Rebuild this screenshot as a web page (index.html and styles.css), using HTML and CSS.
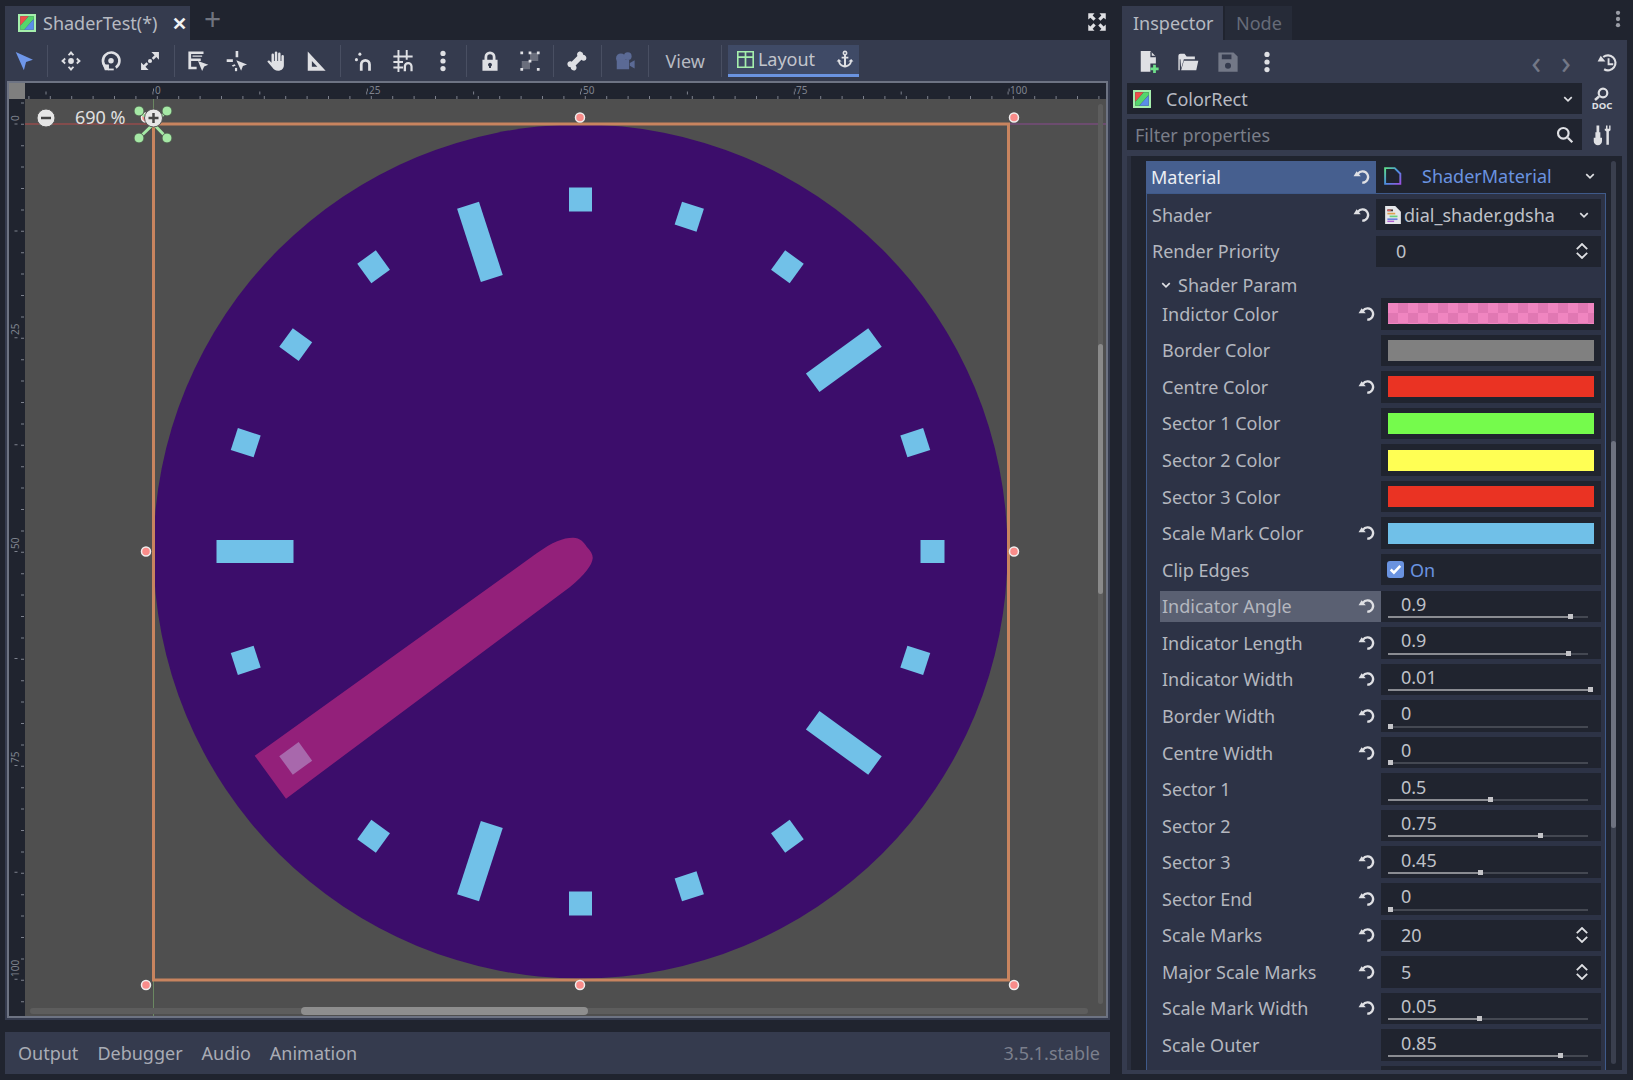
FILE: index.html
```html
<!DOCTYPE html>
<html lang="en">

<head>
  <meta charset="UTF-8">
  <title>ShaderTest - Godot</title>
  <link rel="stylesheet" href="styles.css">
</head>

<body>

  <!-- icon set -->
  <svg class="sprites" width="0" height="0">
    <symbol id="i-select" viewBox="0 0 16 16"><path d="M2 1.5l12.5 5.6-5 1.6-1.6 6z" fill="#6f97ea"/></symbol>
    <symbol id="i-move" viewBox="0 0 16 16"><path d="M8 .8l2.3 2.6-1 .8L8 3 6.700 4.200l-1-.8zM8 15.200l-2.300-2.600 1-.8L8 13l1.300-1.200 1 .8zM.8 8l2.600-2.300.8 1L3 8l1.200 1.300-.8 1zM15.200 8l-2.600 2.300-.8-1L13 8l-1.200-1.300.8-1z"/><circle cx="8" cy="8" r="2.100"/></symbol>
    <symbol id="i-rotate" viewBox="0 0 16 16"><path d="M4.500 12.600A6 6 0 1 1 11.500 12.800" fill="none" stroke="currentColor" stroke-width="1.900"/><path d="M2 10.500h4.500v4.300H3.500z"/><path d="M6 13.500h4v1.300H6z"/><circle cx="8" cy="7.800" r="2"/></symbol>
    <symbol id="i-scale" viewBox="0 0 16 16"><path d="M9 1.500h5.500V7l-1.900-1.900-2 2-1.300-1.300 2-2zM7 14.500H1.500V9l1.900 1.900 2-2 1.300 1.300-2 2z"/><circle cx="8" cy="8" r="1.500"/></symbol>
    <symbol id="i-list" viewBox="0 0 16 16"><path d="M1 1h11v1.900H3v3.200h7V8H3v4.100h4V14H1z"/><path d="M8 8l7.500 2.800-3 1.200L11 15.300z"/><path d="M4 4h7v.9H4z"/></symbol>
    <symbol id="i-pivot" viewBox="0 0 16 16"><path d="M.5 6.800h4.500v1.900H.5zM7 .8h1.900v4.500H7zM4.200 11.300l2-1 .9.900-2 1z"/><path d="M7.500 7.500l7.800 3-3 1.100-1.300 3.400z"/><path d="M6.500 13h1.600v2.400H6.500z"/></symbol>
    <symbol id="i-hand" viewBox="0 0 16 16"><path d="M4 3.500a.9.9 0 0 1 1.800 0V8h.6V1.900a.9.9 0 0 1 1.800 0V8h.6V2.700a.9.900 0 0 1 1.800 0V8h.6V4.500a.9.9 0 0 1 1.800 0V11c0 2.500-1.800 4-4.200 4-2.100 0-3.200-.8-4.300-2.500L1.200 8.800c-.5-.9.700-1.700 1.400-.9L4 9.300z"/></symbol>
    <symbol id="i-ruler" viewBox="0 0 16 16"><path fill-rule="evenodd" d="M2 1l13 14H2zM5 8v4.200h4z"/></symbol>
    <symbol id="i-snap" viewBox="0 0 16 16"><circle cx="2.500" cy="7" r="1.100"/><circle cx="5" cy="3" r="1.100"/><path d="M5 15v-4.500a4 4 0 0 1 8 0V15h-2v-4.500a2 2 0 0 0-4 0V15z"/></symbol>
    <symbol id="i-grid" viewBox="0 0 16 16"><path d="M4 0h1.400v4H10V0h1.400v4H15v1.400h-3.600V7H10V5.400H5.400V8H8v1.400H5.400V12H8v1.400H5.400V16H4v-2.600H1V12h3V9.400H1V8h3V5.400H1V4h3z"/><path d="M8.500 15.500V12a3.200 3.200 0 0 1 6.500 0v3.500h-1.600V12a1.600 1.600 0 0 0-3.200 0v3.500z"/></symbol>
    <symbol id="i-dots" viewBox="0 0 16 16"><circle cx="8" cy="2.500" r="1.900"/><circle cx="8" cy="8" r="1.900"/><circle cx="8" cy="13.500" r="1.900"/></symbol>
    <symbol id="i-lock" viewBox="0 0 16 16"><path fill-rule="evenodd" d="M8 1a4 4 0 0 1 4 4v2h1.500v8h-11V7H4V5a4 4 0 0 1 4-4zm0 2a2 2 0 0 0-2 2v2h4V5a2 2 0 0 0-2-2zm0 6.200a1.500 1.500 0 0 0-.7 2.800v1h1.400v-1A1.500 1.500 0 0 0 8 9.200z"/></symbol>
    <symbol id="i-group" viewBox="0 0 16 16"><path d="M2 8h6v6H2z M8 2h6v6H8z" fill="#6a6e7c"/><path d="M1 1h2v2H1zM1 13h2v2H1zM13 1h2v2h-2zM13 13h2v2h-2zM7 1h2v2H7zM7 7h2v2H7z"/></symbol>
    <symbol id="i-bone" viewBox="0 0 16 16"><path d="M10.800 1.200a2.300 2.300 0 0 1 1.700 2.300 2.300 2.300 0 0 1 2 3.500c-.9 1.100-2.300 1-3.300.1L7 11.300c.9 1 1 2.400-.1 3.300a2.300 2.300 0 0 1-3.500-2 2.300 2.300 0 0 1-2.300-1.700c-.5-1.900 1.300-3.200 3-2.400l4.200-4.200c-.8-1.700.600-3.600 2.500-3.100z"/></symbol>
    <symbol id="i-camera" viewBox="0 0 16 16"><g fill="#5b6a95"><circle cx="5" cy="6" r="3.500"/><circle cx="10" cy="4.500" r="2.800"/><path d="M2 7h9v7H2zM11.500 9.500L15 7.500v6l-3.500-2z"/></g></symbol>
    <symbol id="i-layout" viewBox="0 0 16 16"><path fill="#a5efac" fill-rule="evenodd" d="M0 0h16v16H0zM1.500 1.500V5h5.700V1.500zm7.300 0V5h5.700V1.500zM1.500 6.500v8h5.700v-8zm7.300 0v8h5.700v-8z"/></symbol>
    <symbol id="i-anchor" viewBox="0 0 16 16"><path fill-rule="evenodd" d="M8 .5a2.200 2.200 0 0 1 .9 4.200V6H11v1.500H8.900v6c1.900-.3 3.300-1.500 3.700-3.200H11L13.500 8l2 2.300h-1.300C13.700 13 11.200 15.500 8 15.500S2.300 13 1.800 10.300H.5L2.500 8 5 10.300H3.400c.4 1.700 1.800 2.900 3.700 3.200v-6H5V6h2.100V4.700A2.200 2.200 0 0 1 8 .5zm0 1.400a.8.800 0 1 0 0 1.600.8.800 0 0 0 0-1.600z"/></symbol>
    <symbol id="i-full" viewBox="0 0 16 16"><path d="M1 1h5L4.500 2.700 7 5.200 5.200 7 2.700 4.500 1 6zM15 1v5l-1.700-1.500L10.800 7 9 5.200l2.500-2.500L10 1zM1 15v-5l1.700 1.500L5.200 9 7 10.800l-2.500 2.500L6 15zM15 15h-5l1.500-1.700L9 10.800 10.800 9l2.500 2.500L15 10z"/></symbol>
    <symbol id="i-colorrect" viewBox="0 0 16 16"><path fill="#a5efac" fill-rule="evenodd" d="M0 0h16v16H0zM2 2v12h12V2z"/><path fill="#f0504a" d="M2 2h7.500L2 10.500z"/><path fill="#55d66b" d="M9.500 2H14v2.500L5.500 14H2v-3.500z"/><path fill="#5a8ee8" d="M14 4.500V14H5.500z"/></symbol>
    <symbol id="i-newfile" viewBox="0 0 16 16"><path d="M2 0h7l4 4v5H9v6H2z"/><path d="M9.500.5v3.500H13" fill="none" stroke="#353b4e"/><path fill="#6fe08a" d="M11 10h2v2h2v2h-2v2h-2v-2H9v-2h2z"/></symbol>
    <symbol id="i-open" viewBox="0 0 16 16"><path fill-rule="evenodd" d="M1 14V3.500A1.500 1.500 0 0 1 2.500 2h3L7 4h6v2H5L3 12.500 2.500 6H2v8zM5 7h10.500l-1.500 7H3z"/></symbol>
    <symbol id="i-save" viewBox="0 0 16 16"><path fill-rule="evenodd" d="M1 1h11l3 3v11H1zM3.500 2.500v3.500h7V2.500zM8 8.500a2.200 2.200 0 1 0 0 4.400 2.200 2.200 0 0 0 0-4.400z"/></symbol>
    <symbol id="i-history" viewBox="0 0 16 16"><path d="M5 4a6 6 0 1 1 .7 9.800" fill="none" stroke="currentColor" stroke-width="1.700"/><path d="M.5 7.500h6.200L3 3z"/><path d="M8.500 5h1.500v4H13v1.500H8.500z"/></symbol>
    <symbol id="i-search" viewBox="0 0 16 16"><circle cx="6.500" cy="6.500" r="4.700" fill="none" stroke="currentColor" stroke-width="1.900"/><path d="M9.800 11.200l1.400-1.400 4 4-1.400 1.400z"/></symbol>
    <symbol id="i-tools" viewBox="0 0 16 16"><path d="M4 1h2v5h.8v4H8v2.500a3 3 0 0 1-6 0V10h1.200V6H4z"/><path d="M10 1v3.500l1.200 1V15h1.800V5.500l1.200-1V1l-1 0v2.500h-1.200V1h-1.100v2.500H10z"/></symbol>
    <symbol id="i-revert" viewBox="0 0 16 16"><path d="M4.300 5.200A5 5 0 1 1 8.200 13" fill="none" stroke="currentColor" stroke-width="2"/><path d="M.5 7.400h6.400L3.200 2.800z"/></symbol>
    <symbol id="i-shadermat" viewBox="0 0 16 16"><path d="M1 1h8.500l5 5v9H1z" fill="none" stroke="url(#matgrad)" stroke-width="1.700"/></symbol>
    <symbol id="i-shaderfile" viewBox="0 0 16 16"><path d="M1 0h9l5 5v11H1z" fill="#e6e7ea"/><path d="M3 3h5v1.700H3z" fill="#4a3a3a"/><path d="M3 3.200h3v1.300H3z" fill="#e05a5a"/><path d="M3 6h7v1.500H3z" fill="#e0a050"/><path d="M5 8.500h7v1.500H5z" fill="#68d080"/><path d="M3 11h9v1.500H3z" fill="#6a80e0"/><path d="M3 13h6v1.300H3z" fill="#b060d0"/></symbol>
    <symbol id="i-updown" viewBox="0 0 16 16"><path d="M2.800 6.200L8 1l5.200 5.200M2.800 9.800L8 15l5.200-5.200" fill="none" stroke="currentColor" stroke-width="1.800"/></symbol>
    <symbol id="i-chevron" viewBox="0 0 16 16"><path d="M3 5.500l5 5 5-5" fill="none" stroke="currentColor" stroke-width="2.200"/></symbol>
    <linearGradient id="matgrad" x1="0" y1="0" x2="1" y2="1">
      <stop offset="0" stop-color="#5fe08a"/>
      <stop offset=".5" stop-color="#4a8ee0"/>
      <stop offset="1" stop-color="#9a50e0"/>
    </linearGradient>
  </svg>

  <div class="editor">

    <div class="tabbar">
      <div class="tab scene-tab">
        <svg class="ic ic-18"><use href="#i-colorrect"/></svg>
        <span class="scene-name">ShaderTest(*)</span>
        <span class="tab-close">✕</span>
      </div>
      <span class="tab-add">+</span>
      <svg class="ic ic-20 full-btn"><use href="#i-full"/></svg>
    </div>

    <div class="main-panel">
      <div class="toolbar">
        <span class="tool"><svg class="ic"><use href="#i-select"/></svg></span>
        <i class="vsep"></i>
        <span class="tool"><svg class="ic"><use href="#i-move"/></svg></span>
        <span class="tool"><svg class="ic"><use href="#i-rotate"/></svg></span>
        <span class="tool"><svg class="ic"><use href="#i-scale"/></svg></span>
        <i class="vsep"></i>
        <span class="tool"><svg class="ic"><use href="#i-list"/></svg></span>
        <span class="tool"><svg class="ic"><use href="#i-pivot"/></svg></span>
        <span class="tool"><svg class="ic"><use href="#i-hand"/></svg></span>
        <span class="tool"><svg class="ic"><use href="#i-ruler"/></svg></span>
        <i class="vsep"></i>
        <span class="tool"><svg class="ic"><use href="#i-snap"/></svg></span>
        <span class="tool"><svg class="ic"><use href="#i-grid"/></svg></span>
        <span class="tool"><svg class="ic"><use href="#i-dots"/></svg></span>
        <i class="vsep"></i>
        <span class="tool"><svg class="ic"><use href="#i-lock"/></svg></span>
        <span class="tool"><svg class="ic"><use href="#i-group"/></svg></span>
        <i class="vsep"></i>
        <span class="tool"><svg class="ic"><use href="#i-bone"/></svg></span>
        <i class="vsep"></i>
        <span class="tool"><svg class="ic"><use href="#i-camera"/></svg></span>
        <i class="vsep"></i>
        <span class="view-btn">View</span>
        <i class="vsep"></i>
        <div class="layout-btn">
          <svg class="ic ic-17"><use href="#i-layout"/></svg>
          <span>Layout</span>
          <svg class="ic ic-18 anchor-ic"><use href="#i-anchor"/></svg>
        </div>
      </div>

      <!-- viewBox is in page pixels, it is easier to measure that way -->
      <svg class="viewport" viewBox="7 81 1101 937" width="1101" height="937">
        <rect x="7" y="81" width="1101" height="937" fill="#4f4f4f"/>

        <circle cx="580.500" cy="551.500" r="427" fill="#3c0d6b"/>

        <g fill="#71c1e8">
          <rect id="tick" x="569" y="187.500" width="23" height="24"/>
          <use href="#tick" transform="rotate(18 580.500 551.500)"/>
          <use href="#tick" transform="rotate(36 580.500 551.500)"/>
          <use href="#tick" transform="rotate(72 580.500 551.500)"/>
          <use href="#tick" transform="rotate(90 580.500 551.500)"/>
          <use href="#tick" transform="rotate(108 580.500 551.500)"/>
          <use href="#tick" transform="rotate(144 580.500 551.500)"/>
          <use href="#tick" transform="rotate(162 580.500 551.500)"/>
          <use href="#tick" transform="rotate(180 580.500 551.500)"/>
          <use href="#tick" transform="rotate(216 580.500 551.500)"/>
          <use href="#tick" transform="rotate(234 580.500 551.500)"/>
          <use href="#tick" transform="rotate(252 580.500 551.500)"/>
          <use href="#tick" transform="rotate(288 580.500 551.500)"/>
          <use href="#tick" transform="rotate(306 580.500 551.500)"/>
          <use href="#tick" transform="rotate(324 580.500 551.500)"/>
          <rect id="tick-major" x="569" y="187.500" width="23" height="77" transform="rotate(270 580.500 551.500)"/>
          <rect x="569" y="187.500" width="23" height="77" transform="rotate(342 580.500 551.500)"/>
          <rect x="569" y="187.500" width="23" height="77" transform="rotate(54 580.500 551.500)"/>
          <rect x="569" y="187.500" width="23" height="77" transform="rotate(126 580.500 551.500)"/>
          <rect x="569" y="187.500" width="23" height="77" transform="rotate(198 580.500 551.500)"/>
        </g>

        <path class="needle" d="M254.700 755.700L536.700 553.300C553 541.500 564 537.500 573.300 537.700C580 538 584 542 586.700 546.700C591 551 593 555 592.700 558.300C592 565 585 575 570 587L286 798.700Z"/>

        <!-- guides -->
        <path d="M153.500 81V124M153.500 979V1018" stroke="#7fae6f" stroke-width="1" opacity=".6"/>
        <path d="M25 124H153" stroke="#b84a4a" stroke-width="1"/>
        <path d="M1008 124H1106" stroke="#8a4a90" stroke-width="1"/>

        <rect x="153.500" y="124" width="855" height="856" fill="none" stroke="#c8845f" stroke-width="3"/>

        <!-- rulers -->
        <rect x="7" y="81" width="1101" height="18" fill="#20242f"/>
        <rect x="7" y="81" width="18" height="937" fill="#20242f"/>
        <rect x="9" y="83" width="16" height="16" fill="#7f7f7f"/>
        <g class="ruler-ticks">
          <path d="M25 97.500H1106" stroke-dasharray="1 20.400" stroke-dashoffset="-3.400"/>
          <path d="M25 93H1106" stroke-width="12" stroke-dasharray="1 105.900" stroke-dashoffset="-20.500"/>
          <path d="M25 90H1106" stroke-width="18" stroke-dasharray="1 212.900" stroke-dashoffset="-128"/>
          <path d="M22.500 99V1018" stroke-dasharray="1 20.400" stroke-dashoffset="-3.400"/>
          <path d="M16 99V1018" stroke-width="18" stroke-dasharray="1 105.900" stroke-dashoffset="-24.500"/>
        </g>
        <g class="ruler-text">
          <text x="155" y="94">0</text>
          <text x="369" y="94">25</text>
          <text x="583" y="94">50</text>
          <text x="796" y="94">75</text>
          <text x="1010" y="94">100</text>
          <text transform="rotate(-90 19 121)" x="19" y="121">0</text>
          <text transform="rotate(-90 19 335)" x="19" y="335">25</text>
          <text transform="rotate(-90 19 549)" x="19" y="549">50</text>
          <text transform="rotate(-90 19 763)" x="19" y="763">75</text>
          <text transform="rotate(-90 19 977)" x="19" y="977">100</text>
        </g>

        <!-- frame -->
        <rect x="8" y="82" width="1099" height="935" fill="none" stroke="#6d7383" stroke-width="2"/>

        <!-- scrollbars -->
        <rect x="1098" y="104" width="5" height="900" rx="2.500" fill="#5d5d5d"/>
        <rect x="1098" y="344" width="5" height="250" rx="2.500" fill="#8a8a8a"/>
        <rect x="30" y="1008" width="1058" height="6" rx="3" fill="#5d5d5d"/>
        <rect x="301" y="1007" width="287" height="8" rx="4" fill="#8e8e8e"/>

        <!-- selection handles -->
        <g class="handle">
          <circle cx="146" cy="117.500" r="4.500"/>
          <circle cx="580" cy="117.500" r="4.500"/>
          <circle cx="1014" cy="117.500" r="4.500"/>
          <circle cx="146" cy="551.500" r="4.500"/>
          <circle cx="1014" cy="551.500" r="4.500"/>
          <circle cx="146" cy="985" r="4.500"/>
          <circle cx="580" cy="985" r="4.500"/>
          <circle cx="1014" cy="985" r="4.500"/>
        </g>

        <!-- anchor gizmo -->
        <g class="anchors">
          <path d="M153.500 124L139 111M153.500 124L167 111M153.500 124L139 138M153.500 124L167 138"/>
          <circle cx="139" cy="111" r="5"/>
          <circle cx="167" cy="111" r="5"/>
          <circle cx="139" cy="138" r="5"/>
          <circle cx="167" cy="138" r="5"/>
        </g>

        <!-- zoom widget -->
        <g class="zoom-ui">
          <circle cx="46" cy="118" r="9"/>
          <path d="M41 118H51" class="zoom-sign"/>
          <circle cx="153.500" cy="118" r="9"/>
          <path d="M148.500 118H158.500M153.500 113V123" class="zoom-sign"/>
        </g>
        <text class="zoom-label" x="75" y="124">690 %</text>
      </svg>
    </div>

    <div class="bottom-panel">
      <span>Output</span>
      <span>Debugger</span>
      <span>Audio</span>
      <span>Animation</span>
      <span class="version">3.5.1.stable</span>
    </div>
  </div>

  <div class="dock">
    <div class="tabbar">
      <div class="tab dock-tab">Inspector</div>
      <div class="tab dock-tab off">Node</div>
      <svg class="ic ic-18 dock-menu"><use href="#i-dots"/></svg>
    </div>

    <div class="dock-panel">
      <div class="dock-tools">
        <span class="tool"><svg class="ic"><use href="#i-newfile"/></svg></span>
        <span class="tool"><svg class="ic"><use href="#i-open"/></svg></span>
        <span class="tool dim"><svg class="ic"><use href="#i-save"/></svg></span>
        <span class="tool"><svg class="ic"><use href="#i-dots"/></svg></span>
        <span class="nav dim first">‹</span>
        <span class="nav dim">›</span>
        <svg class="ic ic-20 history"><use href="#i-history"/></svg>
      </div>

      <div class="node-row">
        <div class="field node-field">
          <svg class="ic ic-18"><use href="#i-colorrect"/></svg>
          <span class="node-name">ColorRect</span>
          <svg class="ic ic-12 right"><use href="#i-chevron"/></svg>
        </div>
        <div class="side-btn">
          <svg viewBox="0 0 24 24" class="ic ic-24">
            <circle cx="13" cy="6" r="4.300" fill="none" stroke="currentColor" stroke-width="2.200"/>
            <path d="M9 9.500L5 13" stroke="currentColor" stroke-width="2.400"/>
            <text x="12" y="22" class="doc-text">DOC</text>
          </svg>
        </div>
      </div>

      <div class="node-row">
        <div class="field filter-field">
          <span>Filter properties</span>
          <svg class="ic ic-18 right"><use href="#i-search"/></svg>
        </div>
        <div class="side-btn"><svg class="ic"><use href="#i-tools"/></svg></div>
      </div>

      <div class="prop-list">
        <div class="prop-scroll"><div class="prop-thumb"></div></div>

        <div class="material-row">
          <div class="material-name">Material <svg class="ic ic-18"><use href="#i-revert"/></svg></div>
          <div class="material-val">
            <svg class="ic ic-18"><use href="#i-shadermat"/></svg>
            <span>ShaderMaterial</span>
            <svg class="ic ic-12 right"><use href="#i-chevron"/></svg>
          </div>
        </div>

        <div class="sub-res">
          <div class="res-row">
            <div class="res-name">Shader <svg class="ic ic-18"><use href="#i-revert"/></svg></div>
            <div class="box shader-box">
              <svg class="ic ic-18"><use href="#i-shaderfile"/></svg>
              <span>dial_shader.gdsha</span>
              <svg class="ic ic-12 right"><use href="#i-chevron"/></svg>
            </div>
          </div>
          <div class="res-row">
            <div class="res-name">Render Priority</div>
            <div class="box spin-box"><span>0</span><svg class="ic ic-16"><use href="#i-updown"/></svg></div>
          </div>
          <div class="group-head"><svg class="ic ic-12"><use href="#i-chevron"/></svg> Shader Param</div>

          <div class="params">
            <div class="prop">
              <div class="prop-name">Indictor Color <svg class="ic ic-18"><use href="#i-revert"/></svg></div>
              <div class="box color-box"><div class="swatch checker"></div></div>
            </div>
            <div class="prop">
              <div class="prop-name">Border Color</div>
              <div class="box color-box"><div class="swatch c-grey"></div></div>
            </div>
            <div class="prop">
              <div class="prop-name">Centre Color <svg class="ic ic-18"><use href="#i-revert"/></svg></div>
              <div class="box color-box"><div class="swatch c-red"></div></div>
            </div>
            <div class="prop">
              <div class="prop-name">Sector 1 Color</div>
              <div class="box color-box"><div class="swatch c-green"></div></div>
            </div>
            <div class="prop">
              <div class="prop-name">Sector 2 Color</div>
              <div class="box color-box"><div class="swatch c-yellow"></div></div>
            </div>
            <div class="prop">
              <div class="prop-name">Sector 3 Color</div>
              <div class="box color-box"><div class="swatch c-red"></div></div>
            </div>
            <div class="prop">
              <div class="prop-name">Scale Mark Color <svg class="ic ic-18"><use href="#i-revert"/></svg></div>
              <div class="box color-box"><div class="swatch c-blue"></div></div>
            </div>
            <div class="prop">
              <div class="prop-name">Clip Edges</div>
              <div class="box check-box">
                <span class="checkbox"><svg viewBox="0 0 16 16"><path d="M3.500 8l3 3 6-6.500" fill="none" stroke="#fff" stroke-width="2.400"/></svg></span>
                <span>On</span>
              </div>
            </div>
            <div class="prop hover">
              <div class="prop-name">Indicator Angle <svg class="ic ic-18"><use href="#i-revert"/></svg></div>
              <div class="box slider-box"><span>0.9</span><div class="track"><div class="fill" style="width:91%"></div></div></div>
            </div>
            <div class="prop">
              <div class="prop-name">Indicator Length <svg class="ic ic-18"><use href="#i-revert"/></svg></div>
              <div class="box slider-box"><span>0.9</span><div class="track"><div class="fill" style="width:90%"></div></div></div>
            </div>
            <div class="prop">
              <div class="prop-name">Indicator Width <svg class="ic ic-18"><use href="#i-revert"/></svg></div>
              <div class="box slider-box"><span>0.01</span><div class="track"><div class="fill" style="width:101%"></div></div></div>
            </div>
            <div class="prop">
              <div class="prop-name">Border Width <svg class="ic ic-18"><use href="#i-revert"/></svg></div>
              <div class="box slider-box"><span>0</span><div class="track"><div class="fill" style="width:1%"></div></div></div>
            </div>
            <div class="prop">
              <div class="prop-name">Centre Width <svg class="ic ic-18"><use href="#i-revert"/></svg></div>
              <div class="box slider-box"><span>0</span><div class="track"><div class="fill" style="width:1%"></div></div></div>
            </div>
            <div class="prop">
              <div class="prop-name">Sector 1</div>
              <div class="box slider-box"><span>0.5</span><div class="track"><div class="fill" style="width:51%"></div></div></div>
            </div>
            <div class="prop">
              <div class="prop-name">Sector 2</div>
              <div class="box slider-box"><span>0.75</span><div class="track"><div class="fill" style="width:76%"></div></div></div>
            </div>
            <div class="prop">
              <div class="prop-name">Sector 3 <svg class="ic ic-18"><use href="#i-revert"/></svg></div>
              <div class="box slider-box"><span>0.45</span><div class="track"><div class="fill" style="width:46%"></div></div></div>
            </div>
            <div class="prop">
              <div class="prop-name">Sector End <svg class="ic ic-18"><use href="#i-revert"/></svg></div>
              <div class="box slider-box"><span>0</span><div class="track"><div class="fill" style="width:1%"></div></div></div>
            </div>
            <div class="prop">
              <div class="prop-name">Scale Marks <svg class="ic ic-18"><use href="#i-revert"/></svg></div>
              <div class="box spin-box"><span>20</span><svg class="ic ic-16"><use href="#i-updown"/></svg></div>
            </div>
            <div class="prop">
              <div class="prop-name">Major Scale Marks <svg class="ic ic-18"><use href="#i-revert"/></svg></div>
              <div class="box spin-box"><span>5</span><svg class="ic ic-16"><use href="#i-updown"/></svg></div>
            </div>
            <div class="prop">
              <div class="prop-name">Scale Mark Width <svg class="ic ic-18"><use href="#i-revert"/></svg></div>
              <div class="box slider-box"><span>0.05</span><div class="track"><div class="fill" style="width:45.5%"></div></div></div>
            </div>
            <div class="prop">
              <div class="prop-name">Scale Outer</div>
              <div class="box slider-box"><span>0.85</span><div class="track"><div class="fill" style="width:86%"></div></div></div>
            </div>
            <div class="prop">
              <div class="prop-name">Scale Inner <svg class="ic ic-18"><use href="#i-revert"/></svg></div>
              <div class="box slider-box"><span>0.75</span><div class="track"><div class="fill" style="width:76%"></div></div></div>
            </div>
          </div>
        </div>
      </div>
    </div>
  </div>

</body>

</html>
```

FILE: styles.css
```css
* {
  box-sizing: border-box;
}

html,
body {
  margin: 0;
  height: 100%;
}

body {
  display: flex;
  width: 1633px;
  height: 1080px;
  padding-left: 5px;
  overflow: hidden;
  background-color: #20242f;
  color: #b4b7bf;
  font-family: "Noto Sans", sans-serif;
  font-size: 18px;
}

.sprites {
  position: absolute;
}

.ic {
  display: block;
  flex: none;
  width: 22px;
  height: 22px;
  fill: currentColor;
  color: #dfe0e4;
}

.ic-12 { width: 12px; height: 12px; }
.ic-16 { width: 16px; height: 16px; }
.ic-17 { width: 17px; height: 17px; }
.ic-18 { width: 18px; height: 18px; }
.ic-20 { width: 20px; height: 20px; }
.ic-24 { width: 24px; height: 24px; }

.right {
  margin-left: auto;
}

/* left side */
.editor {
  display: flex;
  flex-direction: column;
  width: 1105px;
}

.tabbar {
  display: flex;
  align-items: flex-end;
  height: 40px;
}

.tab {
  display: flex;
  align-items: center;
  height: 34px;
  background-color: #353b4e;
}

.scene-tab {
  width: 185px;
  padding-left: 13px;
}

.scene-name {
  margin-left: 7px;
  color: #b7bac2;
  line-height: 1;
}

.tab-close {
  margin-left: 14px;
  color: #f2f2f4;
  font-size: 18px;
  font-weight: 700;
}

.tab-add {
  margin: 0 0 6px 14px;
  color: #70747f;
  font-size: 30px;
  line-height: 30px;
}

.full-btn {
  margin: 0 3px 8px auto;
}

.main-panel {
  height: 980px;
  padding: 0 2px;
  background-color: #353b4e;
}

.toolbar {
  display: flex;
  align-items: center;
  height: 41px;
  margin-left: -3px;
}

.tool {
  display: flex;
  align-items: center;
  justify-content: center;
  flex: none;
  width: 39.500px;
}

.dim .ic,
.tool.dim .ic {
  color: #737887;
}

.vsep {
  flex: none;
  width: 1px;
  height: 32px;
  margin: 0 3.500px;
  background-color: #494f62;
}

.view-btn {
  padding: 0 13px;
  color: #b7bac2;
}

.layout-btn {
  display: flex;
  align-items: center;
  width: 131px;
  height: 32px;
  margin-left: 2px;
  padding-left: 9px;
  border-bottom: 3px solid #6a93e0;
  background-color: #3f4a66;
  color: #c3c5cc;
}

.layout-btn span {
  margin-left: 4px;
}

.anchor-ic {
  margin-left: 21px;
}

.viewport {
  display: block;
}

.needle {
  fill: rgb(205, 45, 132);
  fill-opacity: .6;
}

.ruler-ticks path {
  fill: none;
  stroke: #7d818d;
  stroke-width: 3;
}

.ruler-text {
  fill: #7f838e;
  font-size: 10px;
}

.handle circle {
  fill: #f98c8a;
  stroke: #f0eeee;
  stroke-width: 1.500;
}

.anchors path {
  fill: none;
  stroke: #a5e8a5;
  stroke-width: 3;
}

.anchors circle {
  fill: #a5e8a5;
  stroke: #4d5a4d;
  stroke-width: 1;
}

.zoom-ui circle {
  fill: #e6e6e6;
  stroke: #555;
  stroke-width: 1;
}

.zoom-sign {
  fill: none;
  stroke: #444;
  stroke-width: 2.500;
}

.zoom-label {
  fill: #e0e0e0;
  font-size: 18px;
}

.bottom-panel {
  display: flex;
  align-items: center;
  gap: 19px;
  height: 42px;
  margin-top: 12px;
  padding: 0 10px 0 13px;
  background-color: #353b4e;
  color: #a9acb5;
}

.version {
  margin-left: auto;
  color: #7b7f8c;
}

/* inspector */
.dock {
  display: flex;
  flex-direction: column;
  width: 505px;
  margin-left: 12px;
}

.dock-tab {
  width: 101px;
  padding-left: 11px;
  color: #b7bac2;
}

.dock-tab.off {
  width: 67px;
  margin-left: 2px;
  background-color: #262b38;
  color: #666b78;
}

.dock-menu {
  margin: 0 0 12px auto;
  color: #9a9da6;
}

.dock-panel {
  height: 1034px;
  padding: 0 5px;
  background-color: #353b4e;
}

.dock-tools {
  display: flex;
  align-items: center;
  height: 43px;
  padding-left: 2px;
}

.nav {
  font-size: 32px;
  line-height: 32px;
  color: #737887;
}

.nav.first {
  margin-left: auto;
  margin-right: 20px;
}

.history {
  margin: 0 5px 0 26px;
}

.node-row {
  display: flex;
  margin-bottom: 5px;
}

.field {
  display: flex;
  align-items: center;
  width: 455px;
  height: 31px;
  padding: 0 8px 0 6px;
  background-color: #20242f;
}

.node-name {
  margin-left: 15px;
  color: #b7bac2;
}

.filter-field {
  padding-left: 8px;
  color: #7a7e89;
}

.side-btn {
  display: flex;
  align-items: center;
  justify-content: center;
  flex: 1;
}

.doc-text {
  fill: currentColor;
  font-size: 9.500px;
  font-weight: 700;
  text-anchor: middle;
}

.prop-list {
  position: relative;
  width: 495px;
  height: 914px;
  margin-top: 6px;
  padding: 5px 0 0 15px;
  overflow: hidden;
  background-color: #20242f;
  border-left: 4px solid #2a2f3e;
}

.prop-scroll {
  position: absolute;
  top: 5px;
  right: 6px;
  bottom: 6px;
  width: 5px;
  border-radius: 3px;
  background-color: #3a3f4e;
}

.prop-thumb {
  position: absolute;
  top: 280px;
  left: 0;
  width: 100%;
  height: 387px;
  border-radius: 3px;
  background-color: #6e7280;
}

.material-row {
  display: flex;
  width: 460px;
}

.material-name {
  display: flex;
  align-items: center;
  justify-content: space-between;
  width: 230px;
  height: 32px;
  padding: 0 5px 0 5px;
  background-color: #465f8f;
  color: #eceef3;
}

.material-val {
  display: flex;
  align-items: center;
  width: 230px;
  height: 30px;
  padding: 0 10px 0 8px;
  background-color: #20242f;
  color: #6a93e0;
}

.material-val span {
  margin-left: 20px;
}

.sub-res {
  width: 460px;
  height: 900px;
  padding: 5px 4px 0 0;
  border: 1px solid #3f5a8a;
  background-color: #2d3346;
}

.res-row {
  display: flex;
  justify-content: space-between;
  height: 31px;
  margin-bottom: 5.500px;
}

.res-name {
  display: flex;
  align-items: center;
  justify-content: space-between;
  width: 229px;
  padding: 0 5px;
}

.res-row .box {
  width: 225px;
}

.box {
  display: flex;
  align-items: center;
  background-color: #20242f;
  color: #bfc1c8;
}

.shader-box {
  padding: 0 11px 0 8px;
}

.shader-box span {
  margin-left: 2px;
}

.spin-box {
  justify-content: space-between;
  padding: 0 11px 0 20px;
}

.group-head {
  display: flex;
  align-items: center;
  gap: 6px;
  height: 27px;
  margin-top: -1px;
  padding-left: 13px;
}

.params {
  display: grid;
  grid-auto-rows: 31.500px;
  row-gap: 5.070px;
  padding-left: 13px;
}

.prop {
  display: flex;
  height: 31.500px;
}

.prop-name {
  display: flex;
  align-items: center;
  justify-content: space-between;
  width: 221px;
  padding: 0 5px 0 2px;
}

.prop.hover .prop-name {
  background-color: #5a6072;
}

.prop .box {
  width: 220px;
}

.color-box {
  padding: 0 7px;
}

.swatch {
  width: 100%;
  height: 21px;
}

.checker {
  background: repeating-conic-gradient(#e178b3 0 25%, #f085c0 0 50%) 0 0 / 20px 20px;
}

.c-grey { background-color: #808080; }
.c-red { background-color: #ea3323; }
.c-green { background-color: #75fb4c; }
.c-yellow { background-color: #ffff54; }
.c-blue { background-color: #70c0e8; }

.check-box {
  gap: 6px;
  padding-left: 6px;
  color: #6a93e0;
}

.checkbox {
  display: block;
  width: 17px;
  height: 17px;
  border-radius: 3px;
  background-color: #6a93e0;
}

.checkbox svg {
  display: block;
}

.slider-box {
  position: relative;
  padding: 0 0 5px 20px;
}

.track {
  position: absolute;
  left: 7px;
  bottom: 4px;
  width: 200px;
  height: 2px;
  background-color: #444852;
}

.fill {
  position: relative;
  height: 100%;
  background-color: #8a8c92;
}

.fill::after {
  content: "";
  position: absolute;
  top: -2px;
  right: -3px;
  width: 5px;
  height: 5px;
  background-color: #c4c4c8;
}
```
